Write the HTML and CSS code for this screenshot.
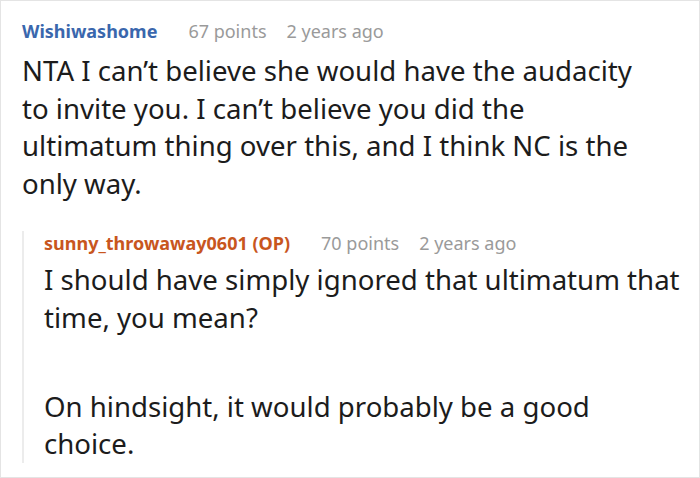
FILE: index.html
```html
<!DOCTYPE html>
<html lang="en">
<head>
<meta charset="utf-8">
<link rel="stylesheet" href="styles.css">
</head>
<body>
<div class="frame">
  <div class="comment">
    <div class="meta">
      <span class="author author-blue">Wishiwashome</span>
      <span class="points">67 points</span>
      <span class="time">2 years ago</span>
    </div>
    <p class="text">NTA I can’t believe she would have the audacity to invite you. I can’t believe you did the ultimatum thing over this, and I think NC is the only way.</p>
  </div>
  <div class="reply">
    <div class="meta">
      <span class="author author-orange">sunny_throwaway0601 (OP)</span>
      <span class="points">70 points</span>
      <span class="time">2 years ago</span>
    </div>
    <p class="text">I should have simply ignored that ultimatum that time, you mean?</p>
    <p class="text para">On hindsight, it would probably be a good choice.</p>
  </div>
</div>
</body>
</html>
```

FILE: styles.css
```css
html, body {
  margin: 0;
  padding: 0;
  background: #ffffff;
}
.frame {
  box-sizing: border-box;
  width: 700px;
  height: 478px;
  border: 1px solid #e4e4e4;
  padding: 18px 8px 0 21px;
  font-family: "Noto Sans", "Open Sans", sans-serif;
  color: #1c1c1c;
  overflow: hidden;
}
.meta {
  display: flex;
  align-items: baseline;
  font-size: 18px;
  line-height: 24px;
  white-space: nowrap;
}
.author {
  font-weight: 700;
  margin-right: 31px;
}
.author-blue { color: #3a67ad; }
.author-orange { color: #c8561e; }
.points {
  color: #9a9a9a;
  margin-right: 20px;
}
.time { color: #9a9a9a; }
.text {
  margin: 0;
  font-size: 27.6px;
  line-height: 37.6px;
  max-width: 640px;
}
.comment .meta { margin-bottom: 9px; }
.reply {
  margin-top: 38px;
  border-left: 2px solid #ececec;
  padding-left: 20px;
}
.reply .meta {
  margin-top: -9px;
  margin-bottom: 6px;
}
.para {
  margin-top: 51px;
  margin-bottom: -4px;
}
```
